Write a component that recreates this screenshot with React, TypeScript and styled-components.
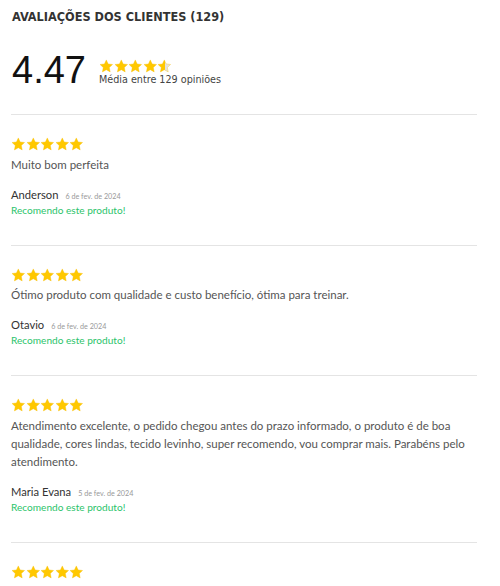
import React from "react";
import styled, { createGlobalStyle } from "styled-components";

const Global = createGlobalStyle`
  html, body { margin: 0; padding: 0; background: #fff; }
  body { font-family: "Lato", "Open Sans", sans-serif; }
`;

const Page = styled.div`
  width: 466px;
  padding: 0 23px 0 11px;
`;

const Title = styled.h2`
  margin: 0;
  padding: 8px 0 0 1px;
  font-family: "DejaVu Sans Condensed", "DejaVu Sans", sans-serif;
  font-weight: bold;
  font-size: 12.6px;
  line-height: 17px;
  color: #333;
`;

const Summary = styled.div`
  display: flex;
  align-items: flex-start;
  gap: 13px;
  margin: 26px 0 25px;
  height: 38px;
  padding-left: 1px;
`;

const Score = styled.div`
  font-family: "Liberation Sans", Arial, sans-serif;
  font-size: 38px;
  line-height: 38px;
  color: #111;
`;

const SummaryInfo = styled.div`
  display: flex;
  flex-direction: column;
  padding-top: 8px;
`;

const Caption = styled.div`
  margin-top: -1px;
  font-family: "DejaVu Sans Condensed", "DejaVu Sans", sans-serif;
  font-size: 10.7px;
  line-height: 13px;
  color: #444;
`;

const Divider = styled.hr`
  margin: 0;
  border: none;
  border-top: 1px solid #e4e4e4;
`;

const Stars = styled.div<{ $size: number }>`
  display: flex;
  height: ${(p) => p.$size}px;
`;

const Review = styled.div`
  padding: 22px 0 27px 0;
`;

const Text = styled.p`
  margin: 4px 0 0;
  font-size: 11.5px;
  line-height: 18px;
  color: #555;
`;

const Meta = styled.div`
  display: flex;
  align-items: baseline;
  gap: 7px;
  margin-top: 13px;
  height: 16px;
`;

const Name = styled.span`
  font-size: 11.2px;
  line-height: 16px;
  color: #333;
`;

const DateText = styled.span`
  font-size: 7.2px;
  color: #999;
`;

const Recommend = styled.div`
  font-size: 10.1px;
  line-height: 15px;
  color: #2bc36a;
`;

const STAR = "M12 1.5l3.1 6.6 7.2.9-5.3 5 1.4 7.2L12 17.7l-6.4 3.5 1.4-7.2-5.3-5 7.2-.9z";

function Star({ size, fill, id }: { size: number; fill: number; id: string }) {
  return (
    <svg width={size} height={size} viewBox="0 0 24 24">
      <defs>
        <linearGradient id={id}>
          <stop offset={`${fill * 100}%`} stopColor="#ffc800" />
          <stop offset={`${fill * 100}%`} stopColor="#e2e2e2" />
        </linearGradient>
      </defs>
      <path d={STAR} fill={`url(#${id})`} stroke={fill > 0 ? "#f7bd00" : "#e2e2e2"} strokeWidth={0.6} />
    </svg>
  );
}

function StarRow({ value, size, prefix }: { value: number; size: number; prefix: string }) {
  return (
    <Stars $size={size}>
      {[0, 1, 2, 3, 4].map((i) => (
        <Star key={i} size={size} id={`${prefix}-${i}`} fill={Math.max(0, Math.min(1, value - i))} />
      ))}
    </Stars>
  );
}

const reviews = [
  { name: "Anderson", date: "6 de fev. de 2024", text: "Muito bom perfeita" },
  { name: "Otavio", date: "6 de fev. de 2024", text: "Ótimo produto com qualidade e custo benefício, ótima para treinar." },
  {
    name: "Maria Evana",
    date: "5 de fev. de 2024",
    text: "Atendimento excelente, o pedido chegou antes do prazo informado, o produto é de boa qualidade, cores lindas, tecido levinho, super recomendo, vou comprar mais. Parabéns pelo atendimento.",
  },
];

export default function App() {
  return (
    <Page>
      <Global />
      <Title>AVALIAÇÕES DOS CLIENTES (129)</Title>
      <Summary>
        <Score>4.47</Score>
        <SummaryInfo>
          <StarRow value={4.55} size={14.6} prefix="sum" />
          <Caption>Média entre 129 opiniões</Caption>
        </SummaryInfo>
      </Summary>
      <Divider />
      {reviews.map((r, i) => (
        <React.Fragment key={i}>
          <Review>
            <StarRow value={5} size={14.6} prefix={`r${i}`} />
            <Text>{r.text}</Text>
            <Meta>
              <Name>{r.name}</Name>
              <DateText>{r.date}</DateText>
            </Meta>
            <Recommend>Recomendo este produto!</Recommend>
          </Review>
          <Divider />
        </React.Fragment>
      ))}
      <Review>
        <StarRow value={5} size={14.6} prefix="r4" />
      </Review>
    </Page>
  );
}
